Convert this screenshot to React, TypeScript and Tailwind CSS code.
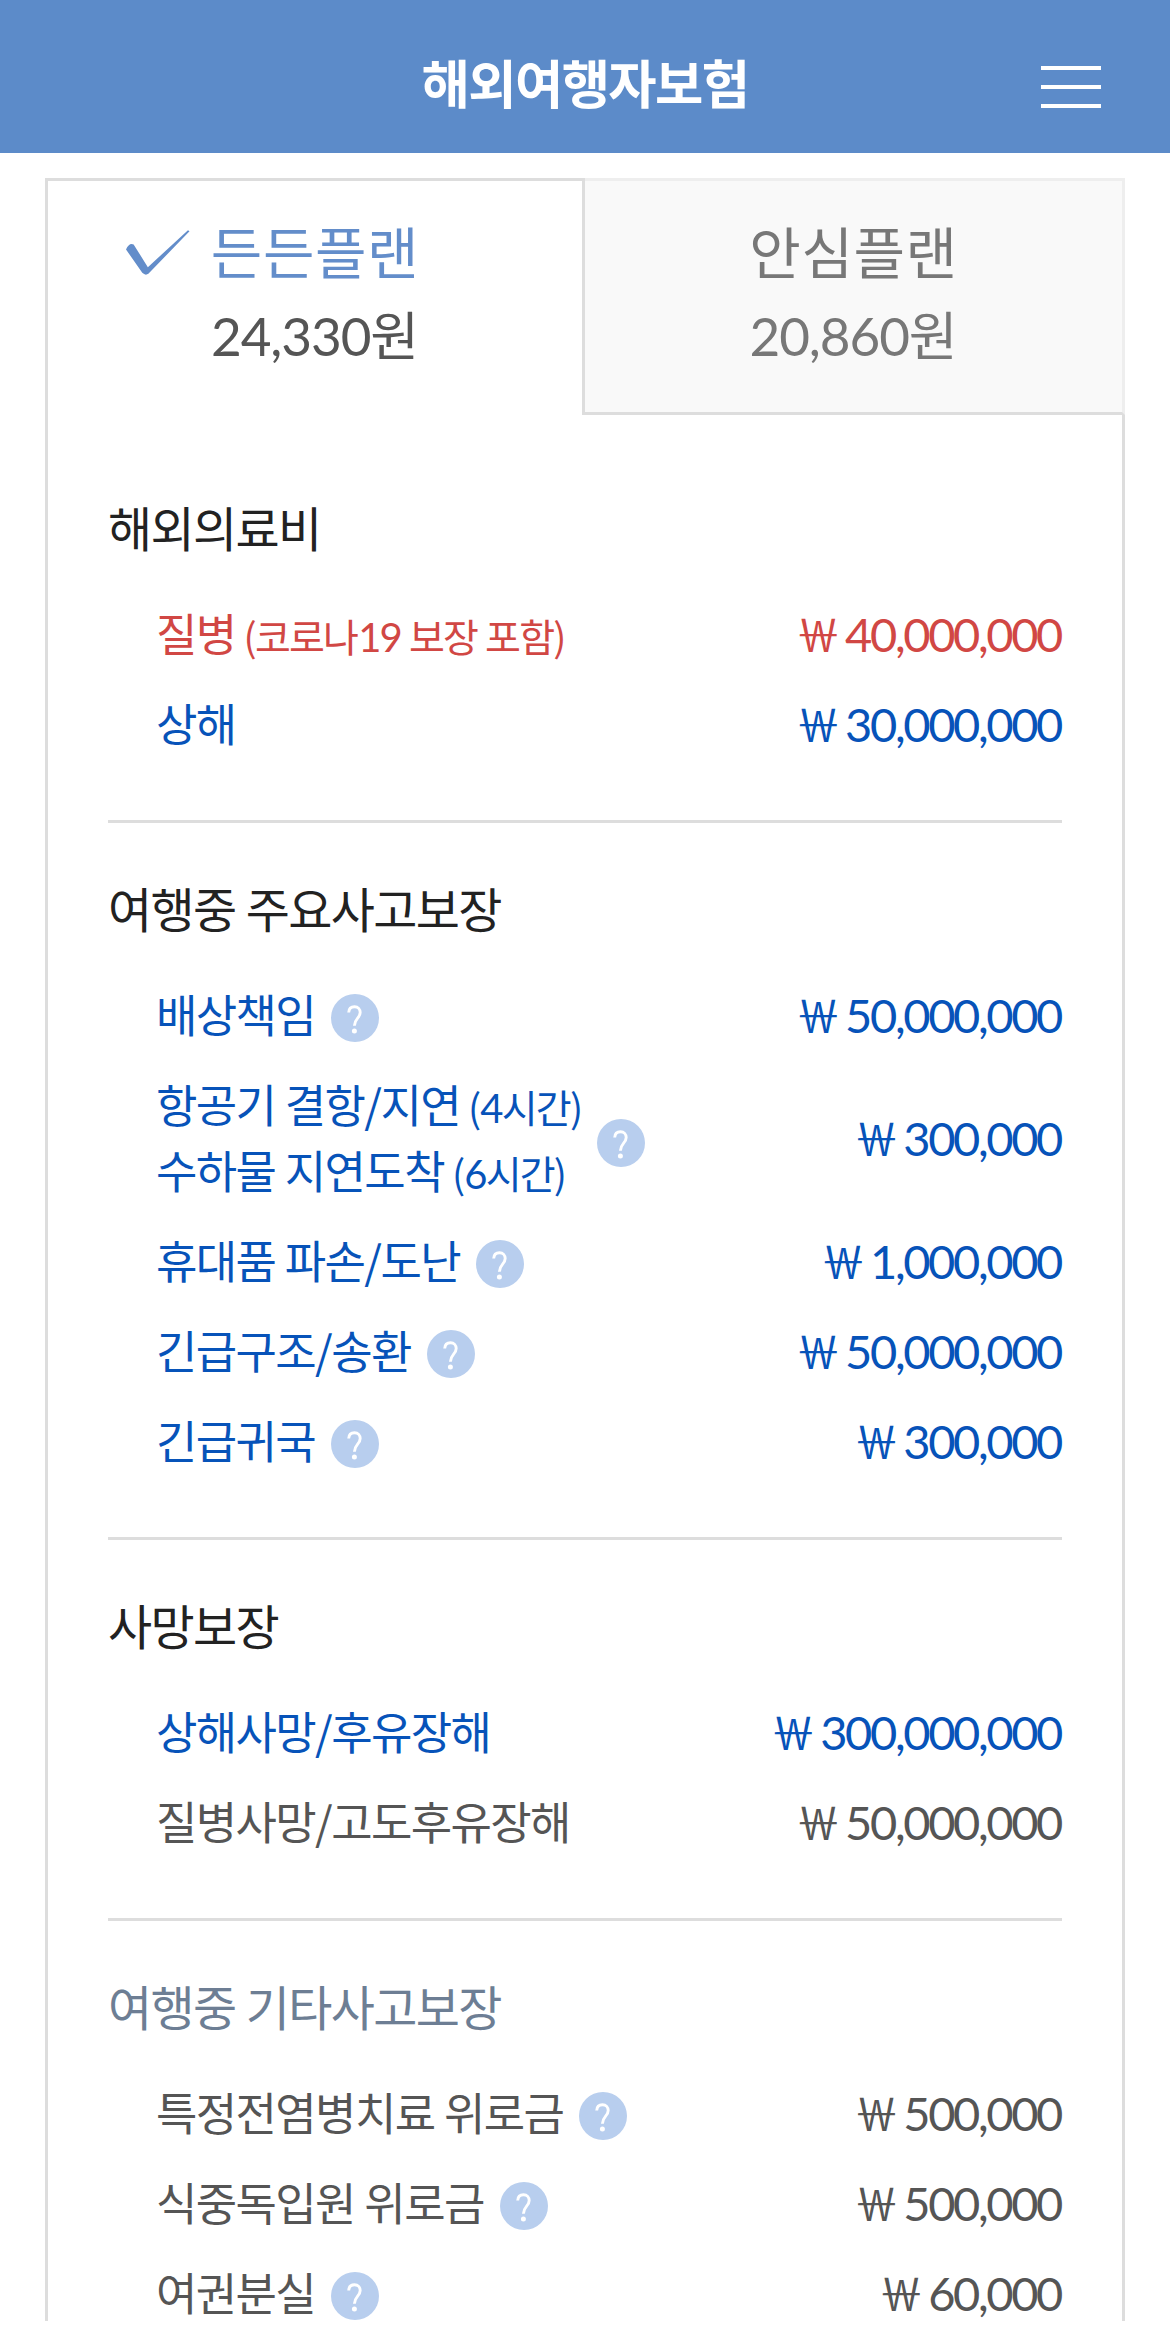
import React, { useState } from 'react';

type Tone = 'red' | 'blue' | 'gray';

interface Coverage {
  lines: { text: string; note?: string }[];
  amount: string;
  tone: Tone;
  help?: boolean;
}

interface Section {
  title: string;
  muted?: boolean;
  items: Coverage[];
}

const TONES: Record<Tone, string> = {
  red: 'text-[#d14744]',
  blue: 'text-[#0753b9]',
  gray: 'text-[#555555]',
};

const PLANS = [
  { id: 'strong', name: '든든플랜', price: '24,330' },
  { id: 'safe', name: '안심플랜', price: '20,860' },
];

const SECTIONS: Section[] = [
  {
    title: '해외의료비',
    items: [
      { lines: [{ text: '질병', note: '(코로나19 보장 포함)' }], amount: '40,000,000', tone: 'red' },
      { lines: [{ text: '상해' }], amount: '30,000,000', tone: 'blue' },
    ],
  },
  {
    title: '여행중 주요사고보장',
    items: [
      { lines: [{ text: '배상책임' }], amount: '50,000,000', tone: 'blue', help: true },
      {
        lines: [
          { text: '항공기 결항/지연', note: '(4시간)' },
          { text: '수하물 지연도착', note: '(6시간)' },
        ],
        amount: '300,000',
        tone: 'blue',
        help: true,
      },
      { lines: [{ text: '휴대품 파손/도난' }], amount: '1,000,000', tone: 'blue', help: true },
      { lines: [{ text: '긴급구조/송환' }], amount: '50,000,000', tone: 'blue', help: true },
      { lines: [{ text: '긴급귀국' }], amount: '300,000', tone: 'blue', help: true },
    ],
  },
  {
    title: '사망보장',
    items: [
      { lines: [{ text: '상해사망/후유장해' }], amount: '300,000,000', tone: 'blue' },
      { lines: [{ text: '질병사망/고도후유장해' }], amount: '50,000,000', tone: 'gray' },
    ],
  },
  {
    title: '여행중 기타사고보장',
    muted: true,
    items: [
      { lines: [{ text: '특정전염병치료 위로금' }], amount: '500,000', tone: 'gray', help: true },
      { lines: [{ text: '식중독입원 위로금' }], amount: '500,000', tone: 'gray', help: true },
      { lines: [{ text: '여권분실' }], amount: '60,000', tone: 'gray', help: true },
    ],
  },
];

const CheckIcon: React.FC = () => (
  <svg viewBox="0 0 64 44" className="absolute top-[49px] left-[77px] w-[65px] h-[45px]" fill="#638dca">
    <path d="M1 19 Q4 12 8.5 14 L22.5 36.5 L62 0 L63.5 1 L23 43 Q20 45 17 42 Z" />
  </svg>
);

const HelpIcon: React.FC<{ tall?: boolean }> = ({ tall }) => (
  <svg viewBox="0 0 48 48" className={`w-12 h-12 shrink-0 ${tall ? 'mt-[11px]' : 'mt-[7px]'}`}>
    <circle cx="24" cy="24" r="24" fill="#b8ceee" />
    <path d="M17.7 18.5 C17.9 14.7 20.2 12.8 23.5 12.8 C27 12.8 29.2 15.2 29.2 18.6 C29.2 24 23.4 24.5 23.4 31.8" fill="none" stroke="#fff" strokeWidth="2.9" />
    <circle cx="23.4" cy="37" r="2.5" fill="#fff" />
  </svg>
);

// Digits are set in Lato, everything else in Noto
const Note: React.FC<{ text: string }> = ({ text }) => (
  <span className="text-[39px] leading-none tracking-[-0.046em] [word-spacing:1px]">
    {' '}
    {text.split(/(\d+)/).map((part, i) =>
      /\d/.test(part) ? (
        <span key={i} className="ml-px font-[Lato,sans-serif] text-[40px] leading-none tracking-[-0.045em]">{part}</span>
      ) : part
    )}
  </span>
);

const CoverageRow: React.FC<{ item: Coverage }> = ({ item }) => (
  <li className={`flex items-center justify-between pl-12 ${TONES[item.tone]}`}>
    <div className="flex items-center gap-4">
      <div className="text-[45px] leading-[66px] tracking-[-0.036em] [word-spacing:1px]">
        {item.lines.map(line => (
          <p key={line.text} className="h-[66px] whitespace-nowrap">
            {line.text}
            {line.note && <Note text={line.note} />}
          </p>
        ))}
      </div>
      {item.help && <HelpIcon tall={item.lines.length > 1} />}
    </div>
    <p className="h-[66px] pr-px font-[Lato,sans-serif] text-[47px] leading-[69px] tracking-[-0.05em] [word-spacing:-3px] whitespace-nowrap">
      <span className="font-['Noto_Sans_CJK_KR',sans-serif] text-[45px] leading-none">￦</span> {item.amount}
    </p>
  </li>
);

const App: React.FC = () => {
  const [activePlan, setActivePlan] = useState('strong');

  return (
    <div className="w-[1170px] h-[2334px] overflow-hidden bg-white font-['Noto_Sans_CJK_KR',sans-serif]">
      {/* Header */}
      <header className="h-[153px] bg-[#5c8bc9] grid grid-cols-[1fr_auto_1fr] items-center pt-[14px] pr-[69px]">
        <h1 className="col-start-2 pl-[69px] pb-1.5 text-[52.5px] leading-[78px] font-bold tracking-[-0.03em] text-white">해외여행자보험</h1>
        <button className="justify-self-end flex flex-col gap-[15px] pt-[7px]" aria-label="메뉴">
          <span className="block w-[60px] h-1 bg-white" />
          <span className="block w-[60px] h-1 bg-white" />
          <span className="block w-[60px] h-1 bg-white" />
        </button>
      </header>

      <main className="h-[2168px] pt-[25px] px-[45px] overflow-hidden">
        {/* Plan tabs */}
        <div className="flex h-[237px]">
          {PLANS.map(plan => {
            const active = plan.id === activePlan;
            return (
              <button
                key={plan.id}
                onClick={() => setActivePlan(plan.id)}
                className={
                  active
                    ? 'relative w-[540px] pb-2.5 border-3 border-b-0 border-[#dddddd] text-[#555555]'
                    : 'relative w-[540px] pb-[7px] border-3 border-l-0 border-[#eeeeee] border-b-[#dddddd] bg-[#f9f9f9] text-[#777777]'
                }
              >
                {active && <CheckIcon />}
                <span className={`block h-[85px] text-[56px] leading-[82px] tracking-[0.01em] ${active ? 'text-[#638dca]' : ''}`}>{plan.name}</span>
                <span className="block h-[84px] pr-px font-[Lato,'Noto_Sans_CJK_KR',sans-serif] text-[53px] leading-[84px] tracking-[-0.02em]">{plan.price}원</span>
              </button>
            );
          })}
        </div>

        {/* Coverage list */}
        <div className="border-x-3 border-[#dddddd] px-[60px] pt-[78px]">
          {SECTIONS.map(section => (
            <section key={section.title} className="mb-[51px] pb-[64px] border-b-3 border-[#dddddd] last:border-b-0">
              <h2 className={`text-[48px] leading-[66px] tracking-[-0.034em] [word-spacing:1px] ${section.muted ? 'text-[#6d7e94]' : 'text-[#222222]'}`}>
                {section.title}
              </h2>
              <ul className="mt-[41px] flex flex-col gap-6">
                {section.items.map(item => (
                  <CoverageRow key={item.lines[0].text} item={item} />
                ))}
              </ul>
            </section>
          ))}
        </div>
      </main>
    </div>
  );
};

export default App;
